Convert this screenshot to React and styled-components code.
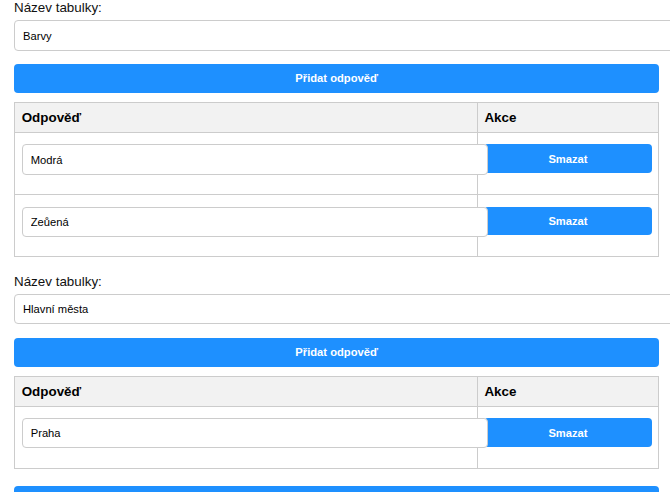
import React from 'react'
import styled, { createGlobalStyle } from 'styled-components'

const GlobalStyle = createGlobalStyle`
  html, body {
    margin: 0;
    overflow: hidden;
    background: #fff;
  }
  body {
    font-family: "Liberation Sans", Arial, sans-serif;
    color: #000;
  }
`

const Page = styled.div`
  width: 645.3px;
  padding-left: 14px;
`

const Section = styled.div`
  margin-bottom: 16.8px;
`

const Label = styled.label`
  display: block;
  font-size: 13.4px;
  line-height: 15.4px;
  margin-bottom: 5px;
  color: #111;
`

const TextInput = styled.input`
  position: relative;
  z-index: 1;
  display: block;
  width: 100%;
  height: 28.2px;
  padding: 0 8px;
  margin: ${(p) => (p.$inCell ? '5px 0 12.6px' : '0 0 13.4px')};
  border: 1px solid #ccc;
  border-radius: 4px;
  background: #fff;
  font-family: "Liberation Sans", Arial, sans-serif;
  font-size: 11.2px;
  color: #000;
  outline: none;
`

const Button = styled.button`
  display: block;
  width: 100%;
  height: 28.8px;
  margin: ${(p) => (p.$inCell ? '5px 0 0' : '0')};
  padding: 0;
  border: none;
  border-radius: 4px;
  background: #1e90ff;
  color: #fff;
  font-family: "Liberation Sans", Arial, sans-serif;
  font-size: 11.2px;
  font-weight: bold;
  cursor: pointer;
`

const Table = styled.table`
  width: 100%;
  margin-top: 9.2px;
  border-collapse: collapse;
  table-layout: fixed;
`

const AnswerCol = styled.col`
  width: 462.7px;
`

const HeadCell = styled.th`
  padding: 6.7px;
  border: 1px solid #ccc;
  background: #f2f2f2;
  text-align: left;
  font-size: 13.4px;
  line-height: 15.4px;
  font-weight: bold;
  color: #000;
`

const Cell = styled.td`
  padding: 6.7px;
  border: 1px solid #ccc;
  vertical-align: top;
`

const tables = [
  { name: 'Barvy', answers: ['Modrá', 'Zeůená'] },
  { name: 'Hlavní města', answers: ['Praha'] },
]

const AnswerTable = ({ table }) => (
  <Section>
    <Label>Název tabulky:</Label>
    <TextInput defaultValue={table.name} />
    <Button>Přidat odpověď</Button>
    <Table>
      <colgroup>
        <AnswerCol />
        <col />
      </colgroup>
      <thead>
        <tr>
          <HeadCell>Odpověď</HeadCell>
          <HeadCell>Akce</HeadCell>
        </tr>
      </thead>
      <tbody>
        {table.answers.map((a) => (
          <tr key={a}>
            <Cell>
              <TextInput $inCell defaultValue={a} />
            </Cell>
            <Cell>
              <Button $inCell>Smazat</Button>
            </Cell>
          </tr>
        ))}
      </tbody>
    </Table>
  </Section>
)

const App = () => (
  <>
    <GlobalStyle />
    <Page>
      {tables.map((t) => (
        <AnswerTable key={t.name} table={t} />
      ))}
      <Button>Přidat tabulku</Button>
    </Page>
  </>
)

export default App
